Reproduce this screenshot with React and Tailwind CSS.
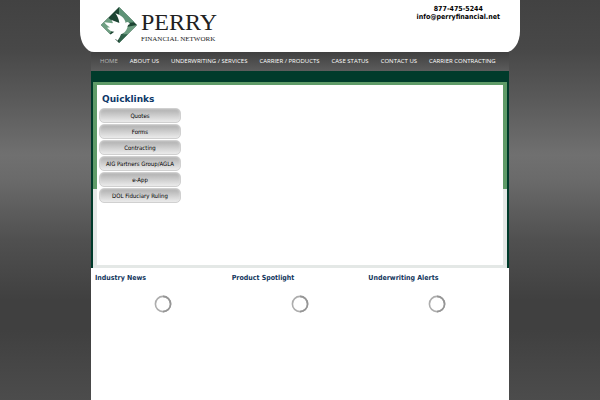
import React from "react";

const NAV_ITEMS = [
  "HOME",
  "ABOUT US",
  "UNDERWRITING / SERVICES",
  "CARRIER / PRODUCTS",
  "CASE STATUS",
  "CONTACT US",
  "CARRIER CONTRACTING",
];

const QUICKLINKS = [
  "Quotes",
  "Forms",
  "Contracting",
  "AIG Partners Group/AGLA",
  "e-App",
  "DOL Fiduciary Ruling",
];

const FEEDS = ["Industry News", "Product Spotlight", "Underwriting Alerts"];

// Green diamond with a white dove flying out of it
function DoveMark() {
  return (
    <svg viewBox="0 0 108 108" className="h-9 w-9 shrink-0" aria-hidden="true">
      <path d="M54 0 108 54 54 108 0 54Z" fill="#1d4533" />
      <path d="M54 0 100 46 78 48 54 34Z" fill="#5f9377" />
      <path d="M0 54 22 32 48 54 26 80Z" fill="#6f9f82" />
      <path d="M54 108 108 54 76 60Z" fill="#6c9d80" />
      <path d="M54 108 54 82 80 82Z" fill="#2f6048" />
      <path
        d="M31 38C39 43 48 44 55 48C54 38 50 28 43 19C59 24 71 33 74 47C78 43 84 45 87 51C81 52 80 56 79 62C76 72 68 79 60 82C58 88 54 95 50 101L44 96L37 100L35 92L22 88L40 74C32 74 24 69 18 62L27 61C20 57 14 52 10 46L24 47C30 48 34 49 36 48Z"
        fill="#fff"
      />
    </svg>
  );
}

function Logo() {
  return (
    <a href="#home" className="flex items-center gap-1 pt-0.5 text-[#222]">
      <DoveMark />
      <span className="flex flex-col font-['Liberation_Serif',serif]">
        <span className="text-[24px] leading-[28px]">PERRY</span>
        <span className="text-[7px] leading-[7px] whitespace-nowrap">FINANCIAL NETWORK</span>
      </span>
    </a>
  );
}

function Spinner() {
  return (
    <svg viewBox="0 0 18 18" className="h-[18px] w-[18px]" role="img" aria-label="Loading">
      <circle cx="9" cy="9" r="7.6" fill="none" stroke="#adadad" strokeWidth="1.6" />
      <path d="M9 1.4A7.6 7.6 0 0 1 9 16.6" fill="none" stroke="#969696" strokeWidth="1.6" />
    </svg>
  );
}

export default function App() {
  return (
    <div className="min-h-screen flex flex-col items-center bg-[#424242] bg-[linear-gradient(to_bottom,#424242_0px,#484848_50px,#5a5a5a_100px,#707070_155px,#6a6a6a_180px,#505050_240px,#404040_300px,#404040_330px,#4c4c4c_400px)] font-['DejaVu_Sans_Condensed','DejaVu_Sans',sans-serif]">
      <header className="w-full max-w-[440px] flex items-start justify-between [border-radius:0_0_14px_14px/0_0_21px_21px] bg-white pt-[5px] pb-[9px] pl-[21px] pr-5">
        <Logo />
        <address className="text-center text-[7px] leading-[8px] font-bold not-italic text-black">
          <a href="tel:8774755244" className="block">877-475-5244</a>
          <a href="mailto:info@perryfinancial.net" className="block">info@perryfinancial.net</a>
        </address>
      </header>

      <div className="w-full max-w-[418px] flex-1 flex flex-col bg-white">
        <nav className="flex gap-3 bg-linear-to-b from-[#404040] to-[#5c5c5c] px-[9px] py-[5px] text-[6px] leading-[9px] font-['Open_Sans',sans-serif] whitespace-nowrap">
          {NAV_ITEMS.map((item, i) => (
            <a key={item} href="#nav" className={i === 0 ? "text-[#b8b8b8]" : "text-white"}>
              {item}
            </a>
          ))}
        </nav>

        <section className="bg-[#003b2b] px-[2px] pt-[11px]">
          <div className="bg-[linear-gradient(to_bottom,#5f9b68_107px,#e4e8e6_107px)] px-1 pt-[3px] pb-[3px]">
            <div className="min-h-[180px] bg-white px-[2px] pt-2">
              <h2 className="px-[3px] text-[9px] leading-[12px] font-bold font-['DejaVu_Sans',sans-serif] text-[#0d3868]">
                Quicklinks
              </h2>
              <ul className="mt-[3px] flex w-[82px] flex-col gap-px">
                {QUICKLINKS.map((label) => (
                  <li key={label}>
                    <a
                      href="#quicklink"
                      className="block rounded-[5px] border border-[#d0d0d0] bg-linear-to-b from-[#b0b0b0] to-[#ececec] shadow-[inset_0_0_2px_#e4e4e4] text-center text-[6px] leading-[13px] whitespace-nowrap text-black"
                    >
                      {label}
                    </a>
                  </li>
                ))}
              </ul>
            </div>
          </div>
        </section>

        <section className="grid grid-cols-3 px-1 pt-[5px]">
          {FEEDS.map((title) => (
            <div key={title}>
              <h3 className="text-[7px] leading-[10px] font-bold text-[#12355c]">{title}</h3>
              <div className="mt-3 flex justify-center">
                <Spinner />
              </div>
            </div>
          ))}
        </section>
      </div>
    </div>
  );
}
